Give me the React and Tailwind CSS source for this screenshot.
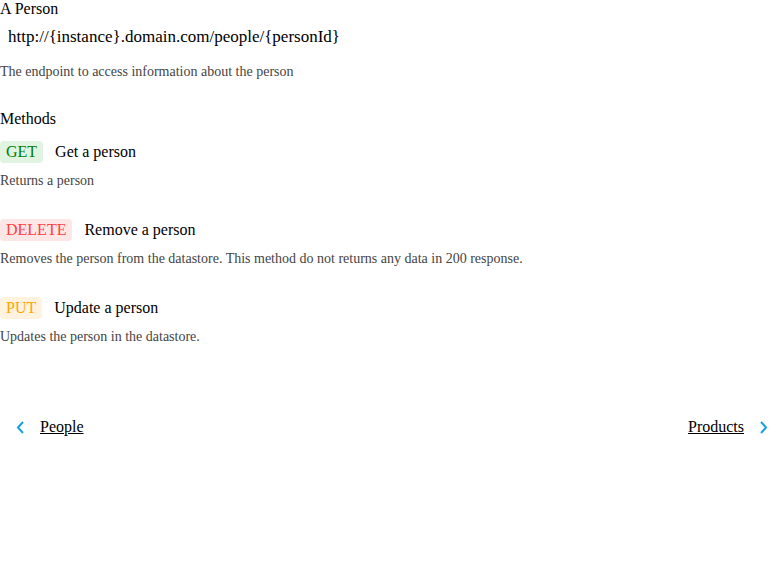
const methods = [
  {
    verb: 'GET',
    title: 'Get a person',
    desc: 'Returns a person',
    badge: 'bg-[#e1f3e1] text-[#008000]',
  },
  {
    verb: 'DELETE',
    title: 'Remove a person',
    desc: 'Removes the person from the datastore. This method do not returns any data in 200 response.',
    badge: 'bg-[#fde6e6] text-[#ff4040]',
  },
  {
    verb: 'PUT',
    title: 'Update a person',
    desc: 'Updates the person in the datastore.',
    badge: 'bg-[#fff3e0] text-[#ffa500]',
  },
]

function Chevron({ dir = 'left' }) {
  const pts = dir === 'left' ? '7,1 2,6.5 7,12' : '1,1 6,6.5 1,12'
  return (
    <svg width="8" height="13" viewBox="0 0 8 13" className="shrink-0">
      <polyline points={pts} fill="none" stroke="#1a9fe0" strokeWidth="2" />
    </svg>
  )
}

export default function App() {
  return (
    <div className="font-['Liberation_Serif',serif] text-black bg-white min-h-[584px]">
      <h1 className="text-base leading-[18px]">A Person</h1>
      <div className="mt-[9px] pl-2 text-[17px] leading-5">http://{'{instance}'}.domain.com/people/{'{personId}'}</div>
      <p className="mt-[17px] text-sm leading-4 text-[#444]">The endpoint to access information about the person</p>

      <h2 className="mt-[30px] text-base leading-[18px]">Methods</h2>
      <div className="mt-[13px] flex flex-col gap-[30px]">
        {methods.map(m => (
          <div key={m.verb}>
            <div className="flex items-center gap-3">
              <span className={`px-1.5 py-0.5 rounded text-base leading-[18px] ${m.badge}`}>{m.verb}</span>
              <span className="text-base leading-[18px]">{m.title}</span>
            </div>
            <p className="mt-[10px] text-sm leading-4 text-[#444]">{m.desc}</p>
          </div>
        ))}
      </div>

      <div className="mt-[73px] px-4 flex items-center justify-between">
        <a href="#" className="flex items-center gap-4 text-base leading-[18px] underline text-black">
          <Chevron dir="left" />
          <span>People</span>
        </a>
        <a href="#" className="flex items-center gap-4 text-base leading-[18px] underline text-black">
          <span>Products</span>
          <Chevron dir="right" />
        </a>
      </div>
    </div>
  )
}
